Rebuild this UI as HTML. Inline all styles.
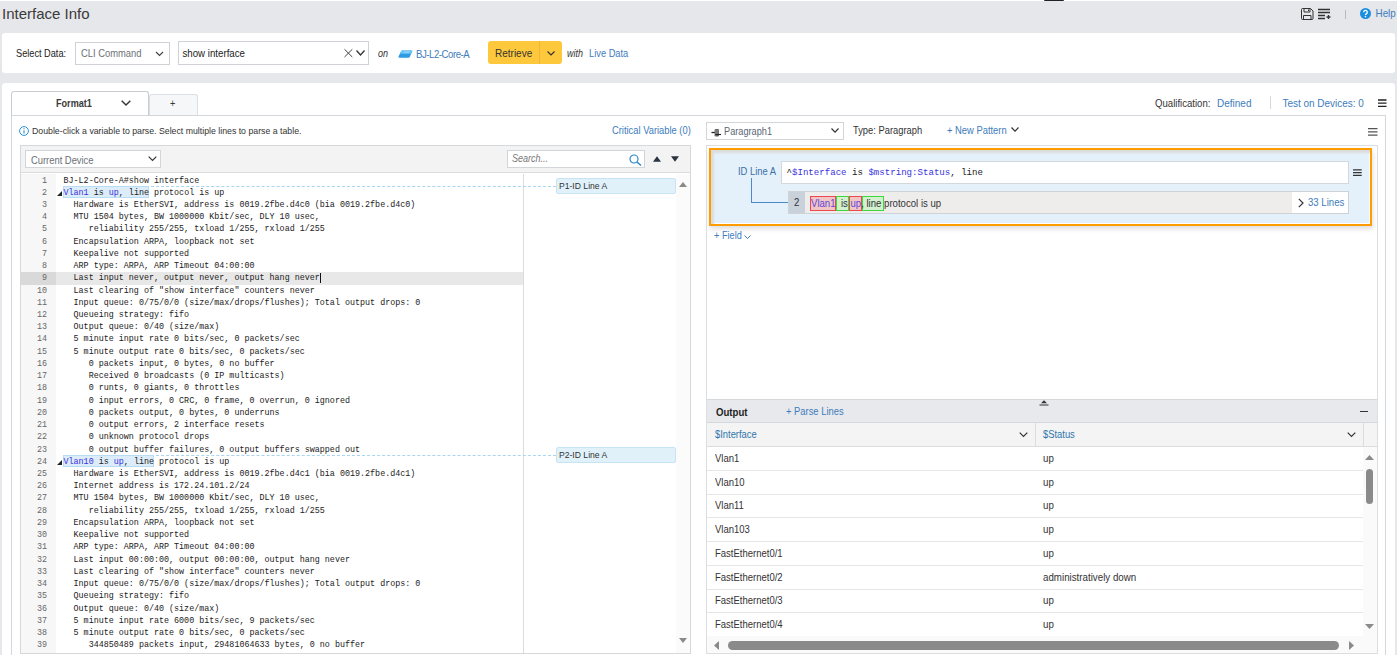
<!DOCTYPE html>
<html><head><meta charset="utf-8"><style>
*{box-sizing:border-box;margin:0;padding:0}
html,body{width:1397px;height:655px;overflow:hidden}
body{background:#e6e7eb;font-family:"Liberation Sans",sans-serif;color:#333;position:relative}
.a{position:absolute}
.t{position:absolute;white-space:pre;line-height:1;transform-origin:0 0.8465em;transform:scaleY(1.12)}
.t.mono{transform:none}
.mono{font-family:"Liberation Mono",monospace}
svg{position:absolute;overflow:visible}
</style></head><body>
<div class="a" style="left:0px;top:0px;width:1397px;height:1px;background:#fff"></div>
<div class="a" style="left:1044px;top:0px;width:20px;height:1px;background:#222;border-radius:0 0 2px 2px"></div>
<div class="t" style="left:2px;top:6px;font-size:15px;color:#3a3a3a;transform:none">Interface Info</div>
<svg style="left:1301px;top:8px" width="13" height="12" viewBox="0 0 13 12">
<path d="M.5 1.5a1 1 0 0 1 1-1h8l2.5 2.5v7.5a1 1 0 0 1-1 1h-9.5a1 1 0 0 1-1-1z" fill="none" stroke="#333" stroke-width="1"/>
<path d="M3 .5v3.5h6V.5M7.5 1.5v1.5" fill="none" stroke="#333" stroke-width="1"/>
<path d="M2.5 11.5V7.5h7.5v4" fill="none" stroke="#333" stroke-width="1"/></svg>
<svg style="left:1318px;top:8px" width="13" height="12" viewBox="0 0 13 12">
<path d="M0 1.5h12M0 4.5h12M0 7.5h7M0 10.5h7" stroke="#333" stroke-width="1.4"/>
<path d="M8.5 9h4M10.5 7v4" stroke="#333" stroke-width="1.3"/></svg>
<div class="a" style="left:1345px;top:10px;width:1px;height:9px;background:#b8bcc2"></div>
<svg style="left:1360px;top:8px" width="11" height="11" viewBox="0 0 11 11">
<circle cx="5.5" cy="5.5" r="5.5" fill="#1a8fe0"/>
<path d="M3.7 4.2a1.8 1.8 0 1 1 2.6 1.6c-.6.3-.8.6-.8 1.2" fill="none" stroke="#fff" stroke-width="1.3"/>
<circle cx="5.5" cy="8.6" r=".8" fill="#fff"/></svg>
<div class="t" style="left:1375.5px;top:9px;font-size:9.9px;color:#3d7cbc">Help</div>
<div class="a" style="left:2px;top:33px;width:1393px;height:40px;background:#fff;border-radius:3px"></div>
<div class="t" style="left:16px;top:50px;font-size:9.2px;color:#222">Select Data:</div>
<div class="a" style="left:75px;top:42px;width:95px;height:23px;border:1px solid #cfd2d6;background:#fff"></div>
<div class="t" style="left:81px;top:49px;font-size:9.4px;color:#6d7278">CLI Command</div>
<svg style="left:155px;top:51px" width="9" height="6" viewBox="0 0 9 6"><path d="M1 1l3.5 3.5L8 1" fill="none" stroke="#444" stroke-width="1.2"/></svg>
<div class="a" style="left:178px;top:41px;width:191px;height:24px;border:1px solid #cfd2d6;background:#fff"></div>
<div class="t" style="left:182.5px;top:49px;font-size:9.7px;color:#222">show interface</div>
<svg style="left:344px;top:49px" width="9" height="8" viewBox="0 0 9 8"><path d="M.5 .3L8.3 8M8.3 .3L.5 8" stroke="#3a3a3a" stroke-width="0.95"/></svg>
<svg style="left:356px;top:50px" width="9" height="6" viewBox="0 0 9 6"><path d="M.5 .5L4.5 5L8.5 .5" fill="none" stroke="#333" stroke-width="1.3"/></svg>
<div class="t" style="left:378px;top:50px;font-size:9px;font-style:italic;color:#333">on</div>
<svg style="left:397.5px;top:49.5px" width="15" height="9" viewBox="0 0 15 9"><path d="M4.2 .5h9.3a.8.8 0 0 1 .7 1.1l-2.4 5.2a1.5 1.5 0 0 1-1.3.9H1.2a.8.8 0 0 1-.7-1.1L3 1.4a1.5 1.5 0 0 1 1.2-.9z" fill="#2c9ae4"/><path d="M4.2 .5h9.3a.8.8 0 0 1 .7 1.1l-.9 2.1H2.2L3 1.4a1.5 1.5 0 0 1 1.2-.9z" fill="#6cc4f6"/><path d="M6 2h5" stroke="#b8e4fb" stroke-width=".7"/></svg>
<div class="t" style="left:416px;top:50px;font-size:9.6px;letter-spacing:-0.45px;color:#3d7cbc">BJ-L2-Core-A</div>
<div class="a" style="left:488px;top:41px;width:74px;height:23px;background:#fdc83b;border-radius:3px"></div>
<div class="a" style="left:539px;top:41px;width:1px;height:23px;background:#f0b43a"></div>
<div class="t" style="left:495px;top:49px;font-size:10px;color:#333">Retrieve</div>
<svg style="left:547px;top:51px" width="8" height="5" viewBox="0 0 8 5"><path d="M.5 .5L4 4L7.5 .5" fill="none" stroke="#333" stroke-width="1.2"/></svg>
<div class="t" style="left:567px;top:50px;font-size:9px;font-style:italic;color:#333">with</div>
<div class="t" style="left:589px;top:50px;font-size:9.3px;color:#3d7cbc">Live Data</div>
<div class="a" style="left:2px;top:83px;width:1393px;height:600px;background:#fff;border-radius:3px"></div>
<div class="a" style="left:11px;top:115px;width:1375px;height:560px;border:1px solid #d3d6da;border-top-color:#d3d6da"></div>
<div class="a" style="left:11px;top:91px;width:138px;height:25px;border:1px solid #c9cdd2;border-bottom:none;border-radius:3px 3px 0 0;background:#fff"></div>
<div class="a" style="left:149px;top:94px;width:49px;height:22px;border:1px solid #dcdfe2;border-bottom:none;border-radius:3px 3px 0 0;background:#f6f7f8"></div>
<div class="a" style="left:11px;top:115px;width:1375px;height:1px;background:#d3d6da"></div>
<div class="t" style="left:56px;top:100px;font-size:9.1px;font-weight:bold;color:#3a3a3a">Format1</div>
<svg style="left:121px;top:100px" width="10" height="6" viewBox="0 0 10 6"><path d="M.7 .7L5 5L9.3 .7" fill="none" stroke="#333" stroke-width="1.4"/></svg>
<div class="t" style="left:170px;top:100px;font-size:9px;color:#333">+</div>
<div class="t" style="left:1155px;top:99px;font-size:9.6px;color:#333">Qualification:</div>
<div class="t" style="left:1217px;top:99px;font-size:10px;color:#3d7cbc">Defined</div>
<div class="a" style="left:1270px;top:96px;width:1px;height:13px;background:#d5d8dc"></div>
<div class="t" style="left:1282.5px;top:99px;font-size:9.95px;color:#3d7cbc">Test on Devices: 0</div>
<svg style="left:1378px;top:99px" width="9" height="9" viewBox="0 0 9 9"><path d="M0 1h8.5M0 4.2h8.5M0 7.4h8.5" stroke="#222" stroke-width="1.3"/></svg>
<svg style="left:19px;top:126px" width="10" height="10" viewBox="0 0 10 10"><circle cx="5" cy="5" r="4.4" fill="none" stroke="#2a8fd8" stroke-width="1"/><path d="M5 4.2v3.2" stroke="#2a8fd8" stroke-width="1.1"/><circle cx="5" cy="2.7" r=".6" fill="#2a8fd8"/></svg>
<div class="t" style="left:32px;top:127px;font-size:8.75px;color:#333">Double-click a variable to parse. Select multiple lines to parse a table.</div>
<div class="t" style="left:612px;top:126.5px;font-size:9.35px;color:#3d7cbc">Critical Variable (0)</div>
<div class="a" style="left:20px;top:145px;width:671px;height:509px;border:1px solid #d6d9dc;background:#fff"></div>
<div class="a" style="left:21px;top:146px;width:669px;height:27px;background:#f3f3f3;border-bottom:1px solid #dcdcdc"></div>
<div class="a" style="left:25px;top:150px;width:136px;height:18px;border:1px solid #d3d6d9;background:#fff"></div>
<div class="t" style="left:31px;top:156px;font-size:9.4px;color:#6b7076">Current Device</div>
<svg style="left:148px;top:156px" width="9" height="6" viewBox="0 0 9 6"><path d="M.7 .7L4.5 4.5L8.3 .7" fill="none" stroke="#333" stroke-width="1.2"/></svg>
<div class="a" style="left:507px;top:150px;width:138px;height:18px;border:1px solid #d3d6d9;background:#fff"></div>
<div class="t" style="left:512px;top:155px;font-size:9px;font-style:italic;color:#777">Search...</div>
<svg style="left:629px;top:154px" width="13" height="12" viewBox="0 0 13 12"><circle cx="5" cy="5" r="4" fill="none" stroke="#2b86c9" stroke-width="1.2"/><path d="M8 8l4 3.5" stroke="#2b86c9" stroke-width="1.5"/></svg>
<svg style="left:652.5px;top:156px" width="8" height="6" viewBox="0 0 8 6"><path d="M4 .2L8 5.8H0z" fill="#2a3340"/></svg>
<svg style="left:671px;top:156px" width="8" height="6" viewBox="0 0 8 6"><path d="M0 .2H8L4 5.8z" fill="#2a3340"/></svg>
<div class="a" style="left:21px;top:174px;width:35px;height:479px;background:#f7f7f7"></div>
<div class="a" style="left:523px;top:174px;width:1px;height:479px;background:#dcdcdc"></div>
<div class="a" style="left:676px;top:174px;width:14px;height:479px;background:#fbfbfb"></div>
<svg style="left:679px;top:182px" width="8" height="5" viewBox="0 0 8 5"><path d="M4 0L8 5H0z" fill="#8a8a8a"/></svg>
<svg style="left:679px;top:638px" width="8" height="5" viewBox="0 0 8 5"><path d="M0 0H8L4 5z" fill="#8a8a8a"/></svg>
<div class="a" style="left:21px;top:272.34px;width:35px;height:12.23px;background:#d9d9d9"></div>
<div class="a" style="left:56px;top:272.34px;width:467px;height:12.23px;background:#e8e8e8"></div>
<div class="t mono" style="left:21px;top:174.50px;width:26px;text-align:right;font-size:8.4px;line-height:12.23px;color:#666">1</div>
<div class="t mono" style="left:63.5px;top:174.50px;font-size:8.4px;line-height:12.23px;color:#222">BJ-L2-Core-A#show interface</div>
<div class="t mono" style="left:21px;top:186.73px;width:26px;text-align:right;font-size:8.4px;line-height:12.23px;color:#666">2</div>
<div class="a" style="left:63px;top:186.43px;width:85.68px;height:11.6px;background:#dcedf9;border:1px solid #b7dcf3"></div>
<svg style="left:57px;top:190.73px" width="5" height="5" viewBox="0 0 5 5"><path d="M5 0V5H0z" fill="#222"/></svg>
<div class="a" style="left:150.7px;top:186.23px;width:405.3px;height:0;border-top:1px dashed #a9d6ee"></div>
<div class="t mono" style="left:63.5px;top:186.73px;font-size:8.4px;line-height:12.23px;color:#222"><span style="color:#3a32e0">Vlan1</span> is <span style="color:#3a32e0">up</span>, line protocol is up</div>
<div class="t mono" style="left:21px;top:198.96px;width:26px;text-align:right;font-size:8.4px;line-height:12.23px;color:#666">3</div>
<div class="t mono" style="left:63.5px;top:198.96px;font-size:8.4px;line-height:12.23px;color:#222">  Hardware is EtherSVI, address is 0019.2fbe.d4c0 (bia 0019.2fbe.d4c0)</div>
<div class="t mono" style="left:21px;top:211.19px;width:26px;text-align:right;font-size:8.4px;line-height:12.23px;color:#666">4</div>
<div class="t mono" style="left:63.5px;top:211.19px;font-size:8.4px;line-height:12.23px;color:#222">  MTU 1504 bytes, BW 1000000 Kbit/sec, DLY 10 usec,</div>
<div class="t mono" style="left:21px;top:223.42px;width:26px;text-align:right;font-size:8.4px;line-height:12.23px;color:#666">5</div>
<div class="t mono" style="left:63.5px;top:223.42px;font-size:8.4px;line-height:12.23px;color:#222">     reliability 255/255, txload 1/255, rxload 1/255</div>
<div class="t mono" style="left:21px;top:235.65px;width:26px;text-align:right;font-size:8.4px;line-height:12.23px;color:#666">6</div>
<div class="t mono" style="left:63.5px;top:235.65px;font-size:8.4px;line-height:12.23px;color:#222">  Encapsulation ARPA, loopback not set</div>
<div class="t mono" style="left:21px;top:247.88px;width:26px;text-align:right;font-size:8.4px;line-height:12.23px;color:#666">7</div>
<div class="t mono" style="left:63.5px;top:247.88px;font-size:8.4px;line-height:12.23px;color:#222">  Keepalive not supported</div>
<div class="t mono" style="left:21px;top:260.11px;width:26px;text-align:right;font-size:8.4px;line-height:12.23px;color:#666">8</div>
<div class="t mono" style="left:63.5px;top:260.11px;font-size:8.4px;line-height:12.23px;color:#222">  ARP type: ARPA, ARP Timeout 04:00:00</div>
<div class="t mono" style="left:21px;top:272.34px;width:26px;text-align:right;font-size:8.4px;line-height:12.23px;color:#666">9</div>
<div class="t mono" style="left:63.5px;top:272.34px;font-size:8.4px;line-height:12.23px;color:#222">  Last input never, output never, output hang never</div>
<div class="t mono" style="left:21px;top:284.57px;width:26px;text-align:right;font-size:8.4px;line-height:12.23px;color:#666">10</div>
<div class="t mono" style="left:63.5px;top:284.57px;font-size:8.4px;line-height:12.23px;color:#222">  Last clearing of &quot;show interface&quot; counters never</div>
<div class="t mono" style="left:21px;top:296.80px;width:26px;text-align:right;font-size:8.4px;line-height:12.23px;color:#666">11</div>
<div class="t mono" style="left:63.5px;top:296.80px;font-size:8.4px;line-height:12.23px;color:#222">  Input queue: 0/75/0/0 (size/max/drops/flushes); Total output drops: 0</div>
<div class="t mono" style="left:21px;top:309.03px;width:26px;text-align:right;font-size:8.4px;line-height:12.23px;color:#666">12</div>
<div class="t mono" style="left:63.5px;top:309.03px;font-size:8.4px;line-height:12.23px;color:#222">  Queueing strategy: fifo</div>
<div class="t mono" style="left:21px;top:321.26px;width:26px;text-align:right;font-size:8.4px;line-height:12.23px;color:#666">13</div>
<div class="t mono" style="left:63.5px;top:321.26px;font-size:8.4px;line-height:12.23px;color:#222">  Output queue: 0/40 (size/max)</div>
<div class="t mono" style="left:21px;top:333.49px;width:26px;text-align:right;font-size:8.4px;line-height:12.23px;color:#666">14</div>
<div class="t mono" style="left:63.5px;top:333.49px;font-size:8.4px;line-height:12.23px;color:#222">  5 minute input rate 0 bits/sec, 0 packets/sec</div>
<div class="t mono" style="left:21px;top:345.72px;width:26px;text-align:right;font-size:8.4px;line-height:12.23px;color:#666">15</div>
<div class="t mono" style="left:63.5px;top:345.72px;font-size:8.4px;line-height:12.23px;color:#222">  5 minute output rate 0 bits/sec, 0 packets/sec</div>
<div class="t mono" style="left:21px;top:357.95px;width:26px;text-align:right;font-size:8.4px;line-height:12.23px;color:#666">16</div>
<div class="t mono" style="left:63.5px;top:357.95px;font-size:8.4px;line-height:12.23px;color:#222">     0 packets input, 0 bytes, 0 no buffer</div>
<div class="t mono" style="left:21px;top:370.18px;width:26px;text-align:right;font-size:8.4px;line-height:12.23px;color:#666">17</div>
<div class="t mono" style="left:63.5px;top:370.18px;font-size:8.4px;line-height:12.23px;color:#222">     Received 0 broadcasts (0 IP multicasts)</div>
<div class="t mono" style="left:21px;top:382.41px;width:26px;text-align:right;font-size:8.4px;line-height:12.23px;color:#666">18</div>
<div class="t mono" style="left:63.5px;top:382.41px;font-size:8.4px;line-height:12.23px;color:#222">     0 runts, 0 giants, 0 throttles</div>
<div class="t mono" style="left:21px;top:394.64px;width:26px;text-align:right;font-size:8.4px;line-height:12.23px;color:#666">19</div>
<div class="t mono" style="left:63.5px;top:394.64px;font-size:8.4px;line-height:12.23px;color:#222">     0 input errors, 0 CRC, 0 frame, 0 overrun, 0 ignored</div>
<div class="t mono" style="left:21px;top:406.87px;width:26px;text-align:right;font-size:8.4px;line-height:12.23px;color:#666">20</div>
<div class="t mono" style="left:63.5px;top:406.87px;font-size:8.4px;line-height:12.23px;color:#222">     0 packets output, 0 bytes, 0 underruns</div>
<div class="t mono" style="left:21px;top:419.10px;width:26px;text-align:right;font-size:8.4px;line-height:12.23px;color:#666">21</div>
<div class="t mono" style="left:63.5px;top:419.10px;font-size:8.4px;line-height:12.23px;color:#222">     0 output errors, 2 interface resets</div>
<div class="t mono" style="left:21px;top:431.33px;width:26px;text-align:right;font-size:8.4px;line-height:12.23px;color:#666">22</div>
<div class="t mono" style="left:63.5px;top:431.33px;font-size:8.4px;line-height:12.23px;color:#222">     0 unknown protocol drops</div>
<div class="t mono" style="left:21px;top:443.56px;width:26px;text-align:right;font-size:8.4px;line-height:12.23px;color:#666">23</div>
<div class="t mono" style="left:63.5px;top:443.56px;font-size:8.4px;line-height:12.23px;color:#222">     0 output buffer failures, 0 output buffers swapped out</div>
<div class="t mono" style="left:21px;top:455.79px;width:26px;text-align:right;font-size:8.4px;line-height:12.23px;color:#666">24</div>
<div class="a" style="left:63px;top:455.49px;width:90.72px;height:11.6px;background:#dcedf9;border:1px solid #b7dcf3"></div>
<svg style="left:57px;top:459.79px" width="5" height="5" viewBox="0 0 5 5"><path d="M5 0V5H0z" fill="#222"/></svg>
<div class="a" style="left:155.7px;top:455.29px;width:400.3px;height:0;border-top:1px dashed #a9d6ee"></div>
<div class="t mono" style="left:63.5px;top:455.79px;font-size:8.4px;line-height:12.23px;color:#222"><span style="color:#3a32e0">Vlan10</span> is <span style="color:#3a32e0">up</span>, line protocol is up</div>
<div class="t mono" style="left:21px;top:468.02px;width:26px;text-align:right;font-size:8.4px;line-height:12.23px;color:#666">25</div>
<div class="t mono" style="left:63.5px;top:468.02px;font-size:8.4px;line-height:12.23px;color:#222">  Hardware is EtherSVI, address is 0019.2fbe.d4c1 (bia 0019.2fbe.d4c1)</div>
<div class="t mono" style="left:21px;top:480.25px;width:26px;text-align:right;font-size:8.4px;line-height:12.23px;color:#666">26</div>
<div class="t mono" style="left:63.5px;top:480.25px;font-size:8.4px;line-height:12.23px;color:#222">  Internet address is 172.24.101.2/24</div>
<div class="t mono" style="left:21px;top:492.48px;width:26px;text-align:right;font-size:8.4px;line-height:12.23px;color:#666">27</div>
<div class="t mono" style="left:63.5px;top:492.48px;font-size:8.4px;line-height:12.23px;color:#222">  MTU 1504 bytes, BW 1000000 Kbit/sec, DLY 10 usec,</div>
<div class="t mono" style="left:21px;top:504.71px;width:26px;text-align:right;font-size:8.4px;line-height:12.23px;color:#666">28</div>
<div class="t mono" style="left:63.5px;top:504.71px;font-size:8.4px;line-height:12.23px;color:#222">     reliability 255/255, txload 1/255, rxload 1/255</div>
<div class="t mono" style="left:21px;top:516.94px;width:26px;text-align:right;font-size:8.4px;line-height:12.23px;color:#666">29</div>
<div class="t mono" style="left:63.5px;top:516.94px;font-size:8.4px;line-height:12.23px;color:#222">  Encapsulation ARPA, loopback not set</div>
<div class="t mono" style="left:21px;top:529.17px;width:26px;text-align:right;font-size:8.4px;line-height:12.23px;color:#666">30</div>
<div class="t mono" style="left:63.5px;top:529.17px;font-size:8.4px;line-height:12.23px;color:#222">  Keepalive not supported</div>
<div class="t mono" style="left:21px;top:541.40px;width:26px;text-align:right;font-size:8.4px;line-height:12.23px;color:#666">31</div>
<div class="t mono" style="left:63.5px;top:541.40px;font-size:8.4px;line-height:12.23px;color:#222">  ARP type: ARPA, ARP Timeout 04:00:00</div>
<div class="t mono" style="left:21px;top:553.63px;width:26px;text-align:right;font-size:8.4px;line-height:12.23px;color:#666">32</div>
<div class="t mono" style="left:63.5px;top:553.63px;font-size:8.4px;line-height:12.23px;color:#222">  Last input 00:00:00, output 00:00:00, output hang never</div>
<div class="t mono" style="left:21px;top:565.86px;width:26px;text-align:right;font-size:8.4px;line-height:12.23px;color:#666">33</div>
<div class="t mono" style="left:63.5px;top:565.86px;font-size:8.4px;line-height:12.23px;color:#222">  Last clearing of &quot;show interface&quot; counters never</div>
<div class="t mono" style="left:21px;top:578.09px;width:26px;text-align:right;font-size:8.4px;line-height:12.23px;color:#666">34</div>
<div class="t mono" style="left:63.5px;top:578.09px;font-size:8.4px;line-height:12.23px;color:#222">  Input queue: 0/75/0/0 (size/max/drops/flushes); Total output drops: 0</div>
<div class="t mono" style="left:21px;top:590.32px;width:26px;text-align:right;font-size:8.4px;line-height:12.23px;color:#666">35</div>
<div class="t mono" style="left:63.5px;top:590.32px;font-size:8.4px;line-height:12.23px;color:#222">  Queueing strategy: fifo</div>
<div class="t mono" style="left:21px;top:602.55px;width:26px;text-align:right;font-size:8.4px;line-height:12.23px;color:#666">36</div>
<div class="t mono" style="left:63.5px;top:602.55px;font-size:8.4px;line-height:12.23px;color:#222">  Output queue: 0/40 (size/max)</div>
<div class="t mono" style="left:21px;top:614.78px;width:26px;text-align:right;font-size:8.4px;line-height:12.23px;color:#666">37</div>
<div class="t mono" style="left:63.5px;top:614.78px;font-size:8.4px;line-height:12.23px;color:#222">  5 minute input rate 6000 bits/sec, 9 packets/sec</div>
<div class="t mono" style="left:21px;top:627.01px;width:26px;text-align:right;font-size:8.4px;line-height:12.23px;color:#666">38</div>
<div class="t mono" style="left:63.5px;top:627.01px;font-size:8.4px;line-height:12.23px;color:#222">  5 minute output rate 0 bits/sec, 0 packets/sec</div>
<div class="t mono" style="left:21px;top:639.24px;width:26px;text-align:right;font-size:8.4px;line-height:12.23px;color:#666">39</div>
<div class="t mono" style="left:63.5px;top:639.24px;font-size:8.4px;line-height:12.23px;color:#222">     344850489 packets input, 29481064633 bytes, 0 no buffer</div>
<div class="a" style="left:320px;top:273.34px;width:1px;height:10px;background:#111"></div>
<div class="a" style="left:556px;top:177.7px;width:120px;height:16.5px;background:#e1f1fa;border:1px solid #c7e4f4;border-radius:2px"></div>
<div class="t" style="left:559px;top:182.2px;font-size:8.6px;color:#333">P1-ID Line A</div>
<div class="a" style="left:556px;top:446.8px;width:120px;height:16.5px;background:#e1f1fa;border:1px solid #c7e4f4;border-radius:2px"></div>
<div class="t" style="left:559px;top:451.3px;font-size:8.6px;color:#333">P2-ID Line A</div>
<div class="a" style="left:706px;top:122px;width:138px;height:18px;border:1px solid #d3d6d9;background:#fff"></div>
<svg style="left:711px;top:128px" width="11" height="10" viewBox="0 0 11 10"><path d="M.5 4.5h3.5" stroke="#222" stroke-width="1.3"/><rect x="3.6" y="1" width="4.4" height="7.5" rx="1.2" fill="#666"/><path d="M4 3h3.6M4 5h3.6" stroke="#aaa" stroke-width=".6"/><path d="M4.5 6.5h5.5" stroke="#222" stroke-width="1.1"/></svg>
<div class="t" style="left:724px;top:128px;font-size:9.2px;color:#5b6675">Paragraph1</div>
<svg style="left:831px;top:128px" width="8" height="5" viewBox="0 0 8 5"><path d="M.5 .5L4 4.2L7.5 .5" fill="none" stroke="#333" stroke-width="1.2"/></svg>
<div class="t" style="left:853px;top:127px;font-size:9.35px;color:#333">Type: Paragraph</div>
<div class="t" style="left:947px;top:126px;font-size:9.4px;color:#3d7cbc">+ New Pattern</div>
<svg style="left:1011px;top:127px" width="8" height="5" viewBox="0 0 8 5"><path d="M.5 .5L4 4.2L7.5 .5" fill="none" stroke="#333" stroke-width="1.2"/></svg>
<svg style="left:1368px;top:128px" width="10" height="8" viewBox="0 0 10 8"><path d="M0 .7h9.5M0 3.9h9.5M0 7.1h9.5" stroke="#555" stroke-width="1.2"/></svg>
<div class="a" style="left:706px;top:145px;width:672px;height:509px;border:1px solid #dcdfe2;background:#fff"></div>
<div class="a" style="left:709px;top:148px;width:663px;height:78px;border:2.5px solid #ff9c00;background:#e4f1fa;box-shadow:inset 3px 3px 2px #dcdcdc, inset -1px -1px 0 #fff, 1px 3px 5px rgba(0,0,0,.13)"></div>
<div class="t" style="left:738px;top:167px;font-size:9.4px;color:#3b6fa8">ID Line A</div>
<div class="a" style="left:781px;top:161px;width:568px;height:23px;border:1px solid #d3d8dc;background:#fff"></div>
<div class="t mono" style="left:786.5px;top:168px;font-size:9.1px;color:#222"><span style="color:#111">^</span><span style="color:#3a32e0">$Interface</span> is <span style="color:#3a32e0">$mstring:Status</span>, line</div>
<svg style="left:1353px;top:169px" width="9" height="8" viewBox="0 0 9 8"><path d="M0 .8h8.7M0 3.6h8.7M0 6.4h8.7" stroke="#333" stroke-width="1.2"/></svg>
<div class="a" style="left:751px;top:178px;width:1px;height:24px;background:#4a8cc9"></div>
<div class="a" style="left:751px;top:202px;width:37px;height:1px;background:#4a8cc9"></div>
<div class="a" style="left:788px;top:191px;width:561px;height:23px;border:1px solid #cfd3d6;background:#efedec"></div>
<div class="a" style="left:789px;top:192px;width:16px;height:21px;background:#c9d2da"></div>
<div class="t" style="left:794px;top:198px;font-size:9.6px;color:#333">2</div>
<div class="a" style="left:1292px;top:192px;width:56px;height:21px;background:#fff"></div>
<svg style="left:1298px;top:198px" width="6" height="10" viewBox="0 0 6 10"><path d="M.8 .8L5 5L.8 9.2" fill="none" stroke="#333" stroke-width="1.2"/></svg>
<div class="t" style="left:1308px;top:198px;font-size:9.6px;color:#3d7cbc">33 Lines</div>
<div class="a" style="left:810px;top:195.5px;width:26px;height:15px;background:#f2c4c6;border:1px solid #e84a4f"></div>
<div class="a" style="left:835.5px;top:195.5px;width:13px;height:15px;background:#d3f0cf;border:1px solid #3fd83f"></div>
<div class="a" style="left:848.5px;top:195.5px;width:13px;height:15px;background:#f2c4c6;border:1px solid #e84a4f"></div>
<div class="a" style="left:861.5px;top:195.5px;width:22px;height:15px;background:#d3f0cf;border:1px solid #3fd83f"></div>
<div class="t" style="left:811px;top:199px;font-size:9.6px;color:#333"><span style="color:#5a4bd8">Vlan1</span>&nbsp; is <span style="color:#5a4bd8">up</span>, line protocol is up</div>
<div class="t" style="left:714px;top:232px;font-size:9.2px;color:#3d7cbc">+ Field</div>
<svg style="left:744px;top:235px" width="7" height="4" viewBox="0 0 7 4"><path d="M.5 .5L3.5 3.5L6.5 .5" fill="none" stroke="#3d7cbc" stroke-width="1"/></svg>
<div class="a" style="left:707px;top:399px;width:670px;height:24px;background:#e8e9ec;border-top:1px solid #d6d9dc;border-bottom:1px solid #d6d9dc"></div>
<div class="t" style="left:716px;top:408px;font-size:9.6px;font-weight:bold;color:#222">Output</div>
<div class="t" style="left:786px;top:407px;font-size:9.4px;color:#3d7cbc">+ Parse Lines</div>
<svg style="left:1039px;top:400px" width="10" height="6" viewBox="0 0 10 6"><path d="M5 .3L8 3.3H2z" fill="#333"/><path d="M.5 5h9" stroke="#333" stroke-width="1"/></svg>
<div class="a" style="left:1360px;top:411px;width:8px;height:1.3px;background:#333"></div>
<div class="a" style="left:707px;top:423px;width:670px;height:24px;background:#f4f4f4;border-bottom:1px solid #dddddd"></div>
<div class="a" style="left:1035px;top:423px;width:1px;height:24px;background:#dcdcdc"></div>
<div class="a" style="left:1363px;top:423px;width:1px;height:24px;background:#dcdcdc"></div>
<div class="t" style="left:715px;top:430px;font-size:9.4px;color:#2f75ad">$Interface</div>
<div class="t" style="left:1043px;top:430px;font-size:9.4px;color:#2f75ad">$Status</div>
<svg style="left:1019px;top:432px" width="9" height="6" viewBox="0 0 9 6"><path d="M.7 .7L4.5 4.5L8.3 .7" fill="none" stroke="#333" stroke-width="1.2"/></svg>
<svg style="left:1347px;top:432px" width="9" height="6" viewBox="0 0 9 6"><path d="M.7 .7L4.5 4.5L8.3 .7" fill="none" stroke="#333" stroke-width="1.2"/></svg>
<div class="a" style="left:707px;top:470.0px;width:656px;height:1px;background:#e6e6e6"></div>
<div class="t" style="left:715px;top:454.0px;font-size:9.5px;color:#333">Vlan1</div>
<div class="t" style="left:1043px;top:454.0px;font-size:9.75px;color:#333">up</div>
<div class="a" style="left:707px;top:493.7px;width:656px;height:1px;background:#e6e6e6"></div>
<div class="t" style="left:715px;top:477.7px;font-size:9.5px;color:#333">Vlan10</div>
<div class="t" style="left:1043px;top:477.7px;font-size:9.75px;color:#333">up</div>
<div class="a" style="left:707px;top:517.4px;width:656px;height:1px;background:#e6e6e6"></div>
<div class="t" style="left:715px;top:501.4px;font-size:9.5px;color:#333">Vlan11</div>
<div class="t" style="left:1043px;top:501.4px;font-size:9.75px;color:#333">up</div>
<div class="a" style="left:707px;top:541.1px;width:656px;height:1px;background:#e6e6e6"></div>
<div class="t" style="left:715px;top:525.1px;font-size:9.5px;color:#333">Vlan103</div>
<div class="t" style="left:1043px;top:525.1px;font-size:9.75px;color:#333">up</div>
<div class="a" style="left:707px;top:564.8px;width:656px;height:1px;background:#e6e6e6"></div>
<div class="t" style="left:715px;top:548.8px;font-size:9.5px;color:#333">FastEthernet0/1</div>
<div class="t" style="left:1043px;top:548.8px;font-size:9.75px;color:#333">up</div>
<div class="a" style="left:707px;top:588.5px;width:656px;height:1px;background:#e6e6e6"></div>
<div class="t" style="left:715px;top:572.5px;font-size:9.5px;color:#333">FastEthernet0/2</div>
<div class="t" style="left:1043px;top:572.5px;font-size:9.75px;color:#333">administratively down</div>
<div class="a" style="left:707px;top:612.2px;width:656px;height:1px;background:#e6e6e6"></div>
<div class="t" style="left:715px;top:596.2px;font-size:9.5px;color:#333">FastEthernet0/3</div>
<div class="t" style="left:1043px;top:596.2px;font-size:9.75px;color:#333">up</div>
<div class="a" style="left:707px;top:635.9px;width:656px;height:1px;background:#e6e6e6"></div>
<div class="t" style="left:715px;top:619.9px;font-size:9.5px;color:#333">FastEthernet0/4</div>
<div class="t" style="left:1043px;top:619.9px;font-size:9.75px;color:#333">up</div>
<div class="a" style="left:1363px;top:447px;width:14px;height:189px;background:#fafafa"></div>
<svg style="left:1365px;top:455px" width="9" height="5" viewBox="0 0 9 5"><path d="M4.5 0L9 5H0z" fill="#8a8a8a"/></svg>
<div class="a" style="left:1366px;top:469px;width:7px;height:35px;background:#8a8a8a;border-radius:4px"></div>
<svg style="left:1365px;top:624px" width="9" height="5" viewBox="0 0 9 5"><path d="M0 0H9L4.5 5z" fill="#8a8a8a"/></svg>
<div class="a" style="left:707px;top:636px;width:670px;height:17px;background:#fafafa"></div>
<svg style="left:714px;top:641px" width="5" height="9" viewBox="0 0 5 9"><path d="M5 0V9L0 4.5z" fill="#8a8a8a"/></svg>
<div class="a" style="left:728px;top:641px;width:611px;height:8.5px;background:#8a8a8a;border-radius:5px"></div>
<svg style="left:1349px;top:641px" width="5" height="9" viewBox="0 0 5 9"><path d="M0 0V9L5 4.5z" fill="#8a8a8a"/></svg>
</body></html>
